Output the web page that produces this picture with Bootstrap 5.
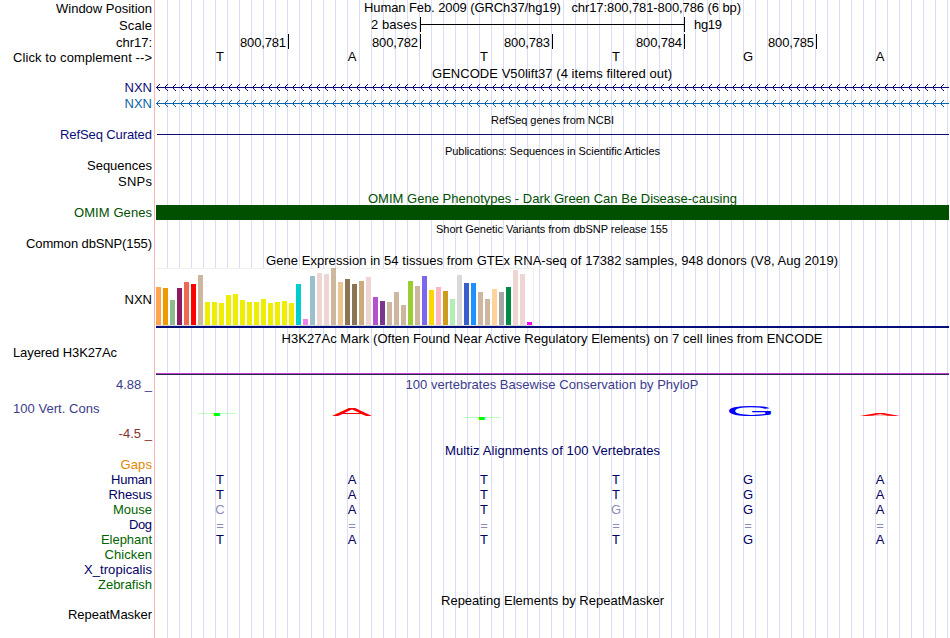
<!DOCTYPE html>
<html lang="en">
<head>
    <meta charset="UTF-8">
    <title>Human chr17:800,781-800,786</title>
    <meta name="viewport" content="width=device-width, initial-scale=1">
    <link href="https://cdn.jsdelivr.net/npm/bootstrap@5.3.2/dist/css/bootstrap.min.css" rel="stylesheet">
    <script src="https://cdn.jsdelivr.net/npm/bootstrap@5.3.2/dist/js/bootstrap.bundle.min.js"></script>
    <style>
        body { background: #fff; color: #000; font: 13px "Liberation Sans", Arial, sans-serif; overflow: hidden; }
        .browser { width: 949px; height: 638px; background: linear-gradient(#ffb4b4, #ffb4b4) 154px 0 / 1px 100% no-repeat, repeating-linear-gradient(90deg, #dcdcf5 0 1px, transparent 1px 12px) 167px 0 no-repeat; }
        .side { width: 156px; padding-right: 4px; }
        .side.wide { padding-left: 13px; }
        .tx { white-space: pre; display: inline-block; }
        .small-title { font-size: 11px; }
        .lift { margin-top: -1px; }
        .drop { margin-top: 1px; }
        .gene-label { padding-top: 2px; }
        .nudge-left { padding-right: 1px; }
        .navy { color: #0c0c78; }
        .sky { color: #0c64aa; }
        .omim { color: #005000; }
        .cons { color: #3c3c8c; }
        .neg { color: #823232; }
        .gaps { color: #e18700; }
        .dark { color: #000064; }
        .leaf { color: #006400; }
        .pale { color: #8c8cb8; }
        .ticks { padding-left: 1px; }
        .tickcell { width: 132px; height: 15px; border-right: 1px solid #000; padding-right: 2px; line-height: 17px; }
        .bases { margin-left: -2px; width: 792px; }
        .bases > span { width: 132px; text-align: center; }
        .ruler { width: 265px; height: 15px; border: solid #000; border-width: 0 1px; background: linear-gradient(#000, #000) 0 7px / 100% 1px no-repeat; margin-left: 3px; margin-right: 9px; }
        .ruler-lead { width: 261px; }
        .refline { height: 1px; background: #0c0c78; margin-left: 1px; }
        .omim-bar { background: #005000; }
        .gtex { border-bottom: 2px solid #000f78; }
        .gtex-box { width: 378px; height: 58px; background: #fff; border: solid #f0f0f0; border-width: 1px 1px 0 0; box-shadow: inset 0 -1px #d8d8d8; padding-bottom: 1px; gap: 2px; }
        .gtex-box > i { width: 5px; flex: none; }
        .h3k { border-bottom: 1px solid #28285a; box-shadow: inset 0 -1px #c83cc8; height: 29px; }
        svg { display: block; }
        .logo { font: 100px "Liberation Sans", Arial, sans-serif; }
    </style>
</head>
<body>
<div class="browser d-flex flex-column" id="browser"></div>
<script>
// colour and expression height for each GTEx tissue
const gtex = [
    ['#ffa54f', 38], ['#ee9a00', 37], ['#8fbc8f', 25], ['#8b1c62', 37], ['#ee6a50', 43], ['#ff0000', 41], ['#cdb79e', 50],
    ['#eeee00', 23], ['#eeee00', 23], ['#eeee00', 22], ['#eeee00', 30], ['#eeee00', 31], ['#eeee00', 25], ['#eeee00', 23],
    ['#eeee00', 23], ['#eeee00', 26], ['#eeee00', 22], ['#eeee00', 23], ['#eeee00', 24], ['#eeee00', 22], ['#00cdcd', 41],
    ['#ee82ee', 6], ['#9ac0cd', 49], ['#eed5d2', 52], ['#eed5d2', 51], ['#cdb79e', 57], ['#eec591', 43], ['#8b7355', 46],
    ['#8b7355', 41], ['#cdaa7d', 44], ['#eed5d2', 48], ['#b452cd', 28], ['#7a378b', 24], ['#cdb79e', 23], ['#cdb79e', 33],
    ['#cdb79e', 20], ['#9acd32', 44], ['#cdb79e', 39], ['#7b68ee', 49], ['#ffd700', 35], ['#ffb6c1', 38], ['#cd9b1d', 34],
    ['#b4eeb4', 26], ['#d9d9d9', 50], ['#3a5fcd', 42], ['#1e90ff', 42], ['#cdb79e', 33], ['#cdb79e', 26], ['#ffd39b', 36],
    ['#a6a6a6', 33], ['#008b45', 38], ['#eed5d2', 55], ['#eed5d2', 51], ['#ff00ff', 3]
];

// text run, w is its drawn width
const tx = (s, w, cls = '') => `<span class="tx ${cls}" data-w="${w}">${s}</span>`;
const bases = (s, cls = '') => `<div class="bases d-flex ${cls}">` +
    [...s].map(b => `<span class="${b === '=' || b === b.toLowerCase() ? 'pale' : ''}">${b.toUpperCase()}</span>`).join('') + '</div>';
const title = (s, w, cls = '', nudge = '') => `<div class="text-center ${nudge}">${tx(s, w, cls)}</div>`;

function arrows(color) {
    let d = '';
    for (let x = 0; x < 793; x += 8) d += `M${x + 4} 4L${x + .5} 7.5L${x + 4} 11`;
    return `<svg width="793" height="15" fill="none" stroke="${color}" shape-rendering="crispEdges"><path d="M0 7.5H793"/><path d="${d}"/></svg>`;
}

function row(h, side, track, mt = 0, wide = false) {
    return `<div class="d-flex flex-shrink-0" style="height:${h}px;line-height:${h}px;margin-top:${mt}px">` +
        `<div class="side flex-shrink-0 ${wide ? 'wide' : 'text-end'}">${side}</div><div class="flex-grow-1">${track}</div></div>`;
}

// letter squeezed to the height of its score; x, y, sx, sy place the baseline
const letter = (c, color, x, y, sx, sy) =>
    `<text class="logo" fill="${color}" transform="translate(${x} ${y}) scale(${sx} ${sy})">${c}</text>`;

const ticks = '<div class="ticks d-flex">' +
    [1, 2, 3, 4, 5].map(n => `<div class="tickcell text-end">${tx('800,78' + n, 46)}</div>`).join('') + '</div>';

document.getElementById('browser').innerHTML = [
    row(17, tx('Window Position', 96), `<div class="d-flex flex-column">${title('Human Feb. 2009 (GRCh37/hg19)   chr17:800,781-800,786 (6 bp)', 377, '', 'lift')}</div>`),
    row(17, tx('Scale', 33), `<div class="d-flex"><div class="ruler-lead text-end lift">${tx('2 bases', 46)}</div><div class="ruler"></div><div class="lift">${tx('hg19', 28)}</div></div>`),
    row(17, tx('chr17:', 36), ticks),
    row(13, tx('Click to complement --&gt;', 139), bases('TATTGA', 'lift')),
    row(13, '', title('GENCODE V50lift37 (4 items filtered out)', 240, '', 'nudge-left'), 3),
    row(15, tx('NXN', 27.5, 'navy'), arrows('#0c0c78')),
    row(15, tx('NXN', 27.5, 'sky'), arrows('#0c64aa'), 1),
    row(14, '', title('RefSeq genes from NCBI', 123, 'small-title'), 2),
    row(15, tx('RefSeq Curated', 92, 'navy'), '<div class="h-100 d-flex align-items-center"><div class="refline flex-grow-1"></div></div>'),
    row(14, '', title('Publications: Sequences in Scientific Articles', 215, 'small-title'), 2),
    row(15, tx('Sequences', 65), ''),
    row(15, tx('SNPs', 34), '', 1),
    row(13, '', title('OMIM Gene Phenotypes - Dark Green Can Be Disease-causing', 369, 'omim'), 3),
    row(15, tx('OMIM Genes', 78, 'omim'), '<div class="omim-bar h-100"></div>'),
    row(14, '', title('Short Genetic Variants from dbSNP release 155', 232, 'small-title', 'nudge-left'), 2),
    row(15, tx('Common dbSNP(155)', 126), ''),
    row(15, '', title('Gene Expression in 54 tissues from GTEx RNA-seq of 17382 samples, 948 donors (V8, Aug 2019)', 572, '', 'nudge-left'), 2),
    row(60, `<div class="gene-label">${tx('NXN', 27.5)}</div>`, '<div class="gtex"><div class="gtex-box d-flex align-items-end">' +
        gtex.map(([c, h]) => `<i style="height:${h}px;background:${c}"></i>`).join('') + '</div></div>'),
    row(15, '', title('H3K27Ac Mark (Often Found Near Active Regulatory Elements) on 7 cell lines from ENCODE', 541, '', 'nudge-left'), 3),
    row(13, tx('Layered H3K27Ac', 104), '<div class="h3k"></div>', 0, true),
    row(15, tx('4.88 _', 36, 'cons'), title('100 vertebrates Basewise Conservation by PhyloP', 293, 'cons', 'nudge-left'), 18),
    row(33, tx('100 Vert. Cons', 86.5, 'cons'), '<svg width="793" height="33">' +
        letter('T', '#00ff00', 40.7, 24, .66, .044) +
        letter('A', '#ff0000', 176, 24, .6, .1) +
        letter('T', '#00ff00', 305.7, 28, .66, .044) +
        letter('G', '#0000ff', 569.8, 23.8, .64, .155) +
        letter('A', '#ff0000', 704, 24, .6, .028) + '</svg>', 0, true),
    row(17, tx('-4.5 _', 33.5, 'neg'), ''),
    row(13, '', title('Multiz Alignments of 100 Vertebrates', 215, 'dark'), 2),
    row(15, tx('Gaps', 31.5, 'gaps'), ''),
    row(15, tx('Human', 41, 'dark'), bases('TATTGA', 'dark')),
    row(15, tx('Rhesus', 43.5, 'dark'), bases('TATTGA', 'dark')),
    row(15, tx('Mouse', 39, 'leaf'), bases('cATgGA', 'dark')),
    row(15, tx('Dog', 23, 'dark'), bases('======', 'drop')),
    row(15, tx('Elephant', 51, 'leaf'), bases('TATTGA', 'dark')),
    row(15, tx('Chicken', 47.5, 'leaf'), ''),
    row(15, tx('X_tropicalis', 68, 'dark'), ''),
    row(15, tx('Zebrafish', 54, 'leaf'), ''),
    row(13, '', title('Repeating Elements by RepeatMasker', 223), 2),
    row(15, tx('RepeatMasker', 84), '')
].join('');

// even out the letter spacing so each run takes its drawn width
document.querySelectorAll('.tx').forEach(el => {
    const gap = (el.dataset.w - el.getBoundingClientRect().width) / (el.textContent.length - 1);
    el.style.letterSpacing = gap + 'px';
    el.style.marginRight = -gap + 'px';
});
</script>
</body>
</html>
